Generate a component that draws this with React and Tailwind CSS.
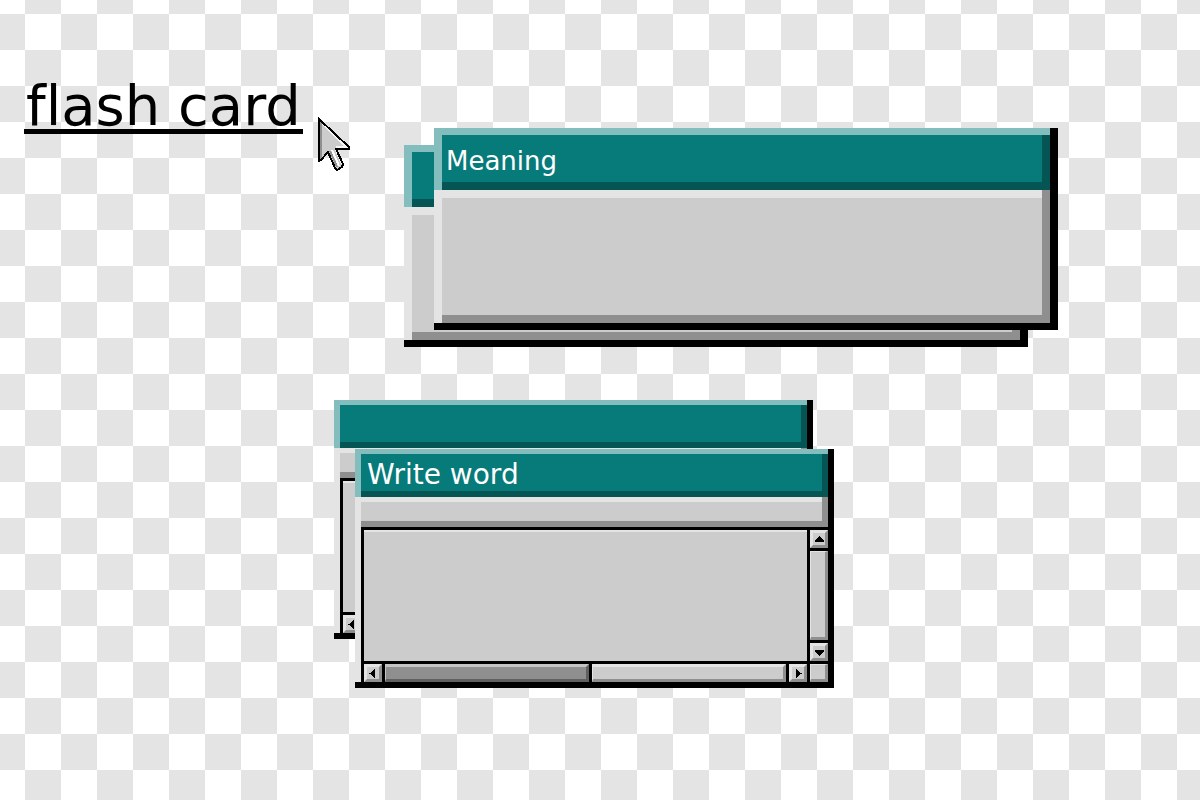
import React from "react";

function Arrow({ dir }) {
  const paths = {
    up: "M5 2h1v1h1v1h1v1h1v1h1v2H1V6h1V5h1V4h1V3h1z",
    down: "M1 3h9v2H9v1H8v1H7v1H6v1H5V8H4V7H3V6H2V5H1z",
    left: "M7 1v9H6V9H5V8H4V7H3V6H1V5h2V4h1V3h1V2h1V1z",
    right: "M3 1h1v1h1v1h1v1h1v1h2v1H7v1H6v1H5v1H4v1H3z",
  };
  return (
    <svg viewBox="0 0 11 11" shapeRendering="crispEdges" className="h-[11px] w-[11px]" aria-hidden="true">
      <path d={paths[dir]} fill="#000" />
    </svg>
  );
}

const raised = "border-[3px] border-t-[#e4e4e4] border-l-[#e4e4e4] border-r-[#8f8f8f] border-b-[#8f8f8f] bg-[#cccccc]";

function ScrollButton({ dir }) {
  return (
    <button type="button" aria-label={"Scroll " + dir} className={"flex h-[18px] w-[18px] shrink-0 items-center justify-center " + raised}>
      <Arrow dir={dir} />
    </button>
  );
}

function CardWindow({ title, hidden, className }) {
  return (
    <section inert={hidden} aria-label={title} className={"absolute flex h-[202px] w-[624px] flex-col bg-black pr-2 pb-[7px] " + className}>
      <header className="flex h-[62px] flex-col bg-[#84bdbd] pt-[7px] pl-2">
        <div className="flex flex-1 flex-col bg-[#055555] pr-2 pb-2">
          <div className="flex flex-1 items-center bg-[#077a7a] pt-1 pl-1">
            {title && <h2 className="font-['DejaVu_Sans',sans-serif] text-[26px] leading-none text-white">{title}</h2>}
          </div>
        </div>
      </header>
      <div className="flex flex-1 bg-[#8f8f8f] pr-2">
        <div className="flex flex-1 flex-col bg-[#e4e4e4] pt-2 pl-2">
          <div className="flex-1 bg-[#cccccc]" />
          <div className="h-2 bg-[#8f8f8f]" />
        </div>
      </div>
    </section>
  );
}

function EditorWindow({ title, hidden, className }) {
  return (
    <section inert={hidden} aria-label={title} className={"absolute flex h-[239px] w-[479px] flex-col bg-black pr-1.5 pb-1.5 " + className}>
      <header className="flex h-12 flex-col bg-[#84bdbd] pt-[5px] pl-1.5">
        <div className="flex flex-1 flex-col bg-[#055555] pr-1.5 pb-1.5">
          <div className="flex flex-1 items-center bg-[#077a7a] pt-1 pl-1.5">
            {title && <h2 className="font-['DejaVu_Sans',sans-serif] text-[28px] leading-none text-white">{title}</h2>}
          </div>
        </div>
      </header>
      <div className="flex h-[30px] bg-[#8f8f8f] pr-1.5">
        <div className="flex flex-1 flex-col bg-[#e4e4e4] pt-[5px] pl-1.5">
          <div className="flex-1 bg-[#cccccc]" />
          <div className="h-1.5 bg-[#8f8f8f]" />
        </div>
      </div>
      <div className="flex flex-1 bg-[#e4e4e4] pl-1.5">
        <div className="flex flex-1 flex-col gap-[3px] bg-black pt-[3px] pl-[3px]">
          <div className="flex flex-1 gap-[3px]">
            <textarea
              aria-label="Word"
              className="block flex-1 resize-none border-t-2 border-t-[#e4e4e4] bg-[#cccccc] p-2 font-['DejaVu_Sans',sans-serif] text-base outline-none"
            />
            <div className="flex w-[18px] flex-col gap-[3px]">
              <ScrollButton dir="up" />
              <div className="flex-1 border-t border-r-[3px] border-b-[3px] border-l border-t-[#e4e4e4] border-r-[#8f8f8f] border-b-[#8f8f8f] border-l-[#e4e4e4] bg-[#cccccc]" />
              <ScrollButton dir="down" />
            </div>
          </div>
          <div className="flex h-[18px] gap-[3px]">
            <ScrollButton dir="left" />
            <div className="w-[204px] border-t-[3px] border-r-[3px] border-b-[3px] border-l border-t-[#c4c4c4] border-r-[#606060] border-b-[#606060] border-l-[#c4c4c4] bg-[#8f8f8f]" />
            <div className="flex-1 border-t-[3px] border-r-[3px] border-b-[3px] border-l border-t-[#e4e4e4] border-r-[#8f8f8f] border-b-[#8f8f8f] border-l-[#e4e4e4] bg-[#cccccc]" />
            <ScrollButton dir="right" />
            <div className="w-[18px] border-t border-r-[3px] border-b-[3px] border-l border-t-[#e4e4e4] border-r-[#8f8f8f] border-b-[#8f8f8f] border-l-[#e4e4e4] bg-[#cccccc]" />
          </div>
        </div>
      </div>
    </section>
  );
}

function Pointer() {
  return (
    <svg viewBox="0 0 34 56" shapeRendering="crispEdges" className="absolute top-[116px] left-[317px] h-14 w-[34px]" aria-hidden="true">
      <path d="M2 3V45L4 44L11 36L18 52L20 54L25 51L26 48L19 33H32V31Z" fill="#cccccc" />
      <path d="M3 5V43L5 42V7Z" fill="#8f8f8f" />
      <path d="M6 8L29 31H20L19 34L25 48" fill="none" stroke="#f4f4f4" strokeWidth="2" />
      <path d="M13 35L20 51" stroke="#8f8f8f" strokeWidth="2" />
      <path d="M15 34L22 50" stroke="#ffffff" strokeWidth="2" />
      <path d="M2 3V45L4 44L11 36L18 52L20 54L25 51L26 48L19 33H32V31Z" fill="none" stroke="#000" strokeWidth="2" strokeLinejoin="miter" />
    </svg>
  );
}

export default function App() {
  return (
    <main className="relative min-h-screen overflow-hidden bg-[conic-gradient(#e4e4e4_25%,#ffffff_0_50%,#e4e4e4_0_75%,#ffffff_0)] bg-[length:72px_72px] bg-[position:-11px_-22px] px-6 pt-[83px]">
      <h1 className="w-fit border-b-[5px] border-black px-0.5 font-['DejaVu_Sans',sans-serif] text-[56px] leading-[46px] whitespace-nowrap text-black [font-variant-ligatures:none]">
        flash card
      </h1>
      <Pointer />
      <CardWindow hidden className="top-[145px] left-[404px]" />
      <CardWindow title="Meaning" className="top-[128px] left-[434px]" />
      <EditorWindow hidden className="top-[400px] left-[334px]" />
      <EditorWindow title="Write word" className="top-[449px] left-[355px]" />
    </main>
  );
}
